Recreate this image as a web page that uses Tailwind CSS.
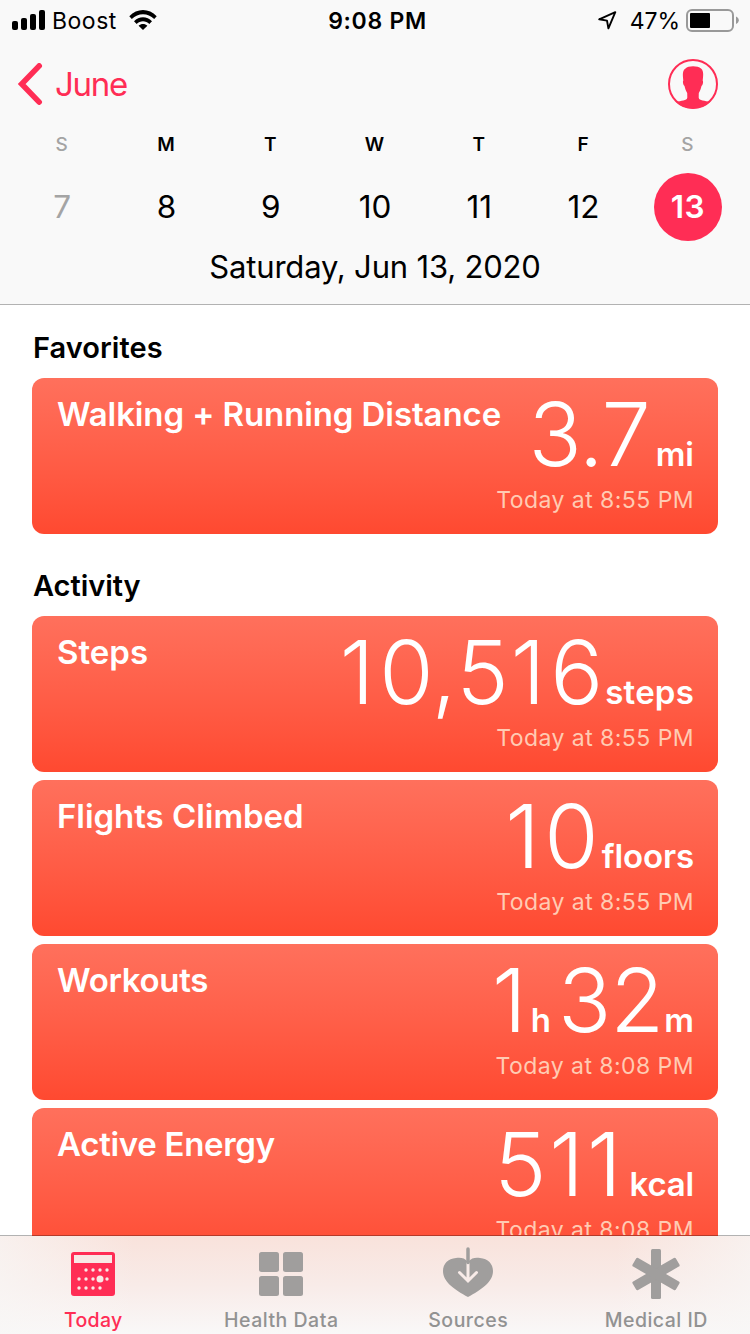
<!DOCTYPE html>
<html lang="en">
<head>
<meta charset="utf-8">
<title>Health</title>
<script src="https://cdn.jsdelivr.net/npm/@tailwindcss/browser@4"></script>
</head>
<body class="bg-white">
<div class="w-[750px] h-[1334px] flex flex-col overflow-hidden bg-white text-black font-['Inter','Liberation_Sans',sans-serif] whitespace-nowrap">
  <header class="h-[305px] shrink-0 bg-[#f9f9f9] border-b border-[#b2b2b2]">
    <!-- status bar -->
    <div class="h-10 grid grid-cols-3 items-center text-[23px] leading-10">
      <div class="flex items-center pl-3">
        <svg class="w-[33px] h-5" viewBox="0 0 33 20"><rect x="0" y="11" width="6" height="9" rx="2"/><rect x="9" y="8" width="6" height="12" rx="2"/><rect x="18" y="4" width="6" height="16" rx="2"/><rect x="27" y="0" width="6" height="20" rx="2"/></svg>
        <span class="ml-[7px] w-[66px] pt-px -mb-px tracking-[0.5px]">Boost</span>
        <svg class="ml-[11px] w-7 h-5" viewBox="0 0 28 20"><path d="M0.3 6.2C8 -2 20 -2 27.700 6.200L25.200 8.900C19 2.600 9 2.600 2.800 8.900Z"/><path d="M5 11.200C10 6 18 6 23 11.200L20.300 13.900C17 10.500 11 10.500 7.700 13.900Z"/><path d="M9.600 15.800C12.200 13.300 15.800 13.300 18.400 15.800L14 20Z"/></svg>
      </div>
      <div class="text-center font-semibold tracking-[0.7px] pl-[5px] pt-px -mb-px">9:08 PM</div>
      <div class="flex items-center justify-end pr-[11px]">
        <svg class="w-[19px] h-[19px] mr-[13px] mt-px" viewBox="0 0 19 19"><path d="M1.200 8.300L17.300 1.200L10.400 17.300L9 9.600Z" fill="none" stroke="#000" stroke-width="1.900" stroke-linejoin="round"/></svg>
        <span class="tracking-[-0.1px] mr-[6px] pt-px -mb-px">47%</span>
        <svg class="w-[53px] h-6" viewBox="0 0 53 24"><rect x="1" y="2" width="46" height="21" rx="5" fill="none" stroke="#999" stroke-width="2"/><rect x="4" y="5" width="20" height="15" rx="1"/><path d="M50 8.500C53.700 10 53.700 14.500 50 16Z" fill="#999"/></svg>
      </div>
    </div>
    <!-- navigation -->
    <div class="h-[88px] flex items-center justify-between pl-[17px] pr-8 text-[#ff2d55]">
      <div class="flex items-center">
        <svg class="w-[26px] h-[42px]" viewBox="0 0 26 42" fill="none" stroke="#ff2d55" stroke-width="5.600" stroke-linecap="round" stroke-linejoin="miter"><path d="M22.200 2.900L4.700 21L22.200 39.100"/></svg>
        <span class="ml-3 text-[33px] leading-10 tracking-[-1.3px]">June</span>
      </div>
      <svg class="w-[50px] h-[50px]" viewBox="0 0 50 50"><circle cx="25" cy="25" r="24" fill="none" stroke="#ff2d55" stroke-width="2"/><path d="M8 43C13 41.500 19 42 19.300 38.500L19.200 34C17.500 31.500 17 28.500 16.500 27C15 26 14.500 22.500 15.300 21.500C14.500 15 14.500 11.500 17.500 9.500C20 6.500 30 6.500 33 9.500C35.500 11.500 35.500 15 34.700 21.500C35.500 22.500 35 26 33.500 27C33 28.500 32.500 31.500 30.800 34L30.700 38.500C31 42 37 41.500 42 43C33 51.500 17 51.500 8 43Z" fill="#ff2d55"/></svg>
    </div>
    <!-- week strip -->
    <div class="grid grid-cols-7 w-[730px] ml-[9.500px] pt-px h-8 leading-8 text-center text-[19px] font-semibold">
      <span class="text-[#a4a4a4] font-[550]">S</span><span>M</span><span>T</span><span>W</span><span>T</span><span>F</span><span class="text-[#a4a4a4] font-[550]">S</span>
    </div>
    <div class="grid grid-cols-7 w-[730px] ml-[10px] mt-[13px] h-[68px] leading-[68px] text-center text-[31.500px]">
      <span class="text-[#a4a4a4]">7</span><span>8</span><span>9</span><span>10</span><span>11</span><span>12</span><span class="w-[68px] justify-self-center rounded-full bg-[#ff2d55] text-white font-semibold tracking-[0.5px]">13</span>
    </div>
    <div class="mt-1 h-11 leading-[44px] text-center text-[31px] tracking-[-0.18px]">Saturday, Jun 13, 2020</div>
  </header>

  <main class="flex-1 min-h-0 overflow-hidden px-8">
    <h2 class="mt-[23px] h-10 leading-10 text-[29px] font-[580] tracking-[0.05px] pl-px">Favorites</h2>
    <section class="mt-[10px] h-[156px] rounded-[12px] bg-linear-to-b from-[#ff705c] to-[#ff4930] text-white pl-[25px] pr-6 flex justify-between">
      <h3 class="w-0 mt-4 h-10 leading-10 text-[33px] font-[570] tracking-[-0.1px]">Walking + Running Distance</h3>
      <div class="flex flex-col items-end">
        <div class="flex items-baseline h-[106px] leading-[112px] text-[88px] font-[280]"><span class="tracking-[-1px]">3.7</span><span class="ml-[6px] text-[33px] font-[570]">mi</span></div>
        <div class="h-8 leading-8 text-[23px] text-[#ffcbb3] tracking-[0.45px]">Today at 8:55 PM</div>
      </div>
    </section>

    <h2 class="mt-8 h-10 leading-10 text-[29px] font-[580] tracking-[-0.05px] pl-px">Activity</h2>
    <div class="mt-[10px] flex flex-col gap-2">
      <section class="h-[156px] shrink-0 rounded-[12px] bg-linear-to-b from-[#ff705c] to-[#ff4930] text-white pl-[25px] pr-6 flex justify-between">
        <h3 class="mt-4 h-10 leading-10 text-[33px] font-[570]">Steps</h3>
        <div class="flex flex-col items-end">
          <div class="flex items-baseline h-[106px] leading-[112px] text-[88px] font-[280]"><span><span class="tracking-[5px]">1</span><span class="tracking-[-2px]">0</span><span>,</span><span class="tracking-[2px]">5</span><span class="tracking-[5px]">1</span><span class="tracking-[1px]">6</span></span><span class="ml-px text-[33px] font-[570] tracking-[0.2px]">steps</span></div>
          <div class="h-8 leading-8 text-[23px] text-[#ffcbb3] tracking-[0.45px]">Today at 8:55 PM</div>
        </div>
      </section>
      <section class="h-[156px] shrink-0 rounded-[12px] bg-linear-to-b from-[#ff705c] to-[#ff4930] text-white pl-[25px] pr-6 flex justify-between">
        <h3 class="mt-4 h-10 leading-10 text-[33px] font-[570] tracking-[-0.05px]">Flights Climbed</h3>
        <div class="flex flex-col items-end">
          <div class="flex items-baseline h-[106px] leading-[112px] text-[88px] font-[280]"><span><span class="tracking-[4.500px]">1</span><span>0</span></span><span class="ml-[3px] text-[33px] font-[570] tracking-[-0.1px]">floors</span></div>
          <div class="h-8 leading-8 text-[23px] text-[#ffcbb3] tracking-[0.45px]">Today at 8:55 PM</div>
        </div>
      </section>
      <section class="h-[156px] shrink-0 rounded-[12px] bg-linear-to-b from-[#ff705c] to-[#ff4930] text-white pl-[25px] pr-6 flex justify-between">
        <h3 class="mt-4 h-10 leading-10 text-[33px] font-[570] tracking-[-0.3px]">Workouts</h3>
        <div class="flex flex-col items-end">
          <div class="flex items-baseline h-[106px] leading-[112px] text-[88px] font-[280]"><span>1</span><span class="ml-1 text-[33px] font-[570]">h</span><span class="ml-[7px] tracking-[-1px]">32</span><span class="ml-px text-[33px] font-[570]">m</span></div>
          <div class="h-8 leading-8 text-[23px] text-[#ffcbb3] tracking-[0.45px]">Today at 8:08 PM</div>
        </div>
      </section>
      <section class="h-[156px] shrink-0 rounded-[12px] bg-linear-to-b from-[#ff705c] to-[#ff4930] text-white pl-[25px] pr-6 flex justify-between">
        <h3 class="mt-4 h-10 leading-10 text-[33px] font-[570] tracking-[-0.3px]">Active Energy</h3>
        <div class="flex flex-col items-end">
          <div class="flex items-baseline h-[106px] leading-[112px] text-[88px] font-[280]"><span class="tracking-[3px]">511</span><span class="ml-[5px] text-[33px] font-[570] tracking-[-0.2px]">kcal</span></div>
          <div class="h-8 leading-8 text-[23px] text-[#ffcbb3] tracking-[0.45px]">Today at 8:08 PM</div>
        </div>
      </section>
    </div>
  </main>

  <!-- tab bar -->
  <nav class="h-[99px] shrink-0 flex flex-col bg-linear-to-b from-[#f9e2db] via-[#f8ebe8] to-[#f9f8f8]">
    <div class="h-px flex bg-[#b2b2b2] px-8"><div class="flex-1 bg-[#b53a2a]"></div></div>
    <div class="flex-1 bg-[linear-gradient(90deg,#f8f7f6b0_0%,#f8f7f600_18%,#f8f7f600_82%,#f8f7f6b0_100%)] grid grid-cols-4 text-center text-[19.500px] font-medium text-[#929292] tracking-[0.5px]">
      <div class="flex flex-col items-center pt-[11px] pr-px text-[#ff2d55]">
        <svg class="w-[50px] h-[54px]" viewBox="0 0 50 54"><rect x="3" y="5" width="44" height="44" rx="3" fill="#ff2d55"/><g fill="#f8e9e6"><rect x="6" y="8" width="38" height="8"/><circle cx="18" cy="23" r="1.700"/><circle cx="25" cy="23" r="1.700"/><circle cx="32" cy="23" r="1.700"/><circle cx="39" cy="23" r="1.700"/><circle cx="11" cy="32" r="1.700"/><circle cx="18" cy="32" r="1.700"/><circle cx="25" cy="32" r="1.700"/><circle cx="32" cy="32" r="3.500"/><circle cx="39" cy="32" r="1.700"/><circle cx="11" cy="41" r="1.700"/><circle cx="18" cy="41" r="1.700"/><circle cx="25" cy="41" r="1.700"/><circle cx="32" cy="41" r="1.700"/></g></svg>
        <span class="mt-[7px] leading-6 tracking-[0.3px]">Today</span>
      </div>
      <div class="flex flex-col items-center pt-[11px]">
        <svg class="w-[50px] h-[54px]" viewBox="0 0 50 54" fill="#a09e9d"><rect x="3" y="5" width="20" height="20" rx="2.500"/><rect x="27" y="5" width="20" height="20" rx="2.500"/><rect x="3" y="29" width="20" height="20" rx="2.500"/><rect x="27" y="29" width="20" height="20" rx="2.500"/></svg>
        <span class="mt-[7px] leading-6">Health Data</span>
      </div>
      <div class="flex flex-col items-center pt-[11px] pr-px">
        <svg class="w-[50px] h-[54px]" viewBox="0 0 50 54"><path d="M25 15C21.500 10.500 17 10.500 13 11C5 11.500 0 17 0 24C0 35 12 43 25 50C38 43 50 35 50 24C50 17 45 11.500 37 11C33 10.500 28.500 10.500 25 15Z" fill="#a09e9d"/><path d="M25 16V33M16.500 25.500L25 34L33.500 25.500" fill="none" stroke="#f8ebe8" stroke-width="3" stroke-linecap="round"/><path d="M25 2V15.500" stroke="#a09e9d" stroke-width="3.500" stroke-linecap="round"/></svg>
        <span class="mt-[7px] leading-6">Sources</span>
      </div>
      <div class="flex flex-col items-center pt-[11px]">
        <svg class="w-[50px] h-[54px]" viewBox="0 0 50 54" fill="#a09e9d"><rect x="20" y="2" width="10" height="50" rx="1.500"/><rect x="20" y="2" width="10" height="50" rx="1.500" transform="rotate(60 25 27)"/><rect x="20" y="2" width="10" height="50" rx="1.500" transform="rotate(120 25 27)"/></svg>
        <span class="mt-[7px] leading-6">Medical ID</span>
      </div>
    </div>
  </nav>
</div>
</body>
</html>
